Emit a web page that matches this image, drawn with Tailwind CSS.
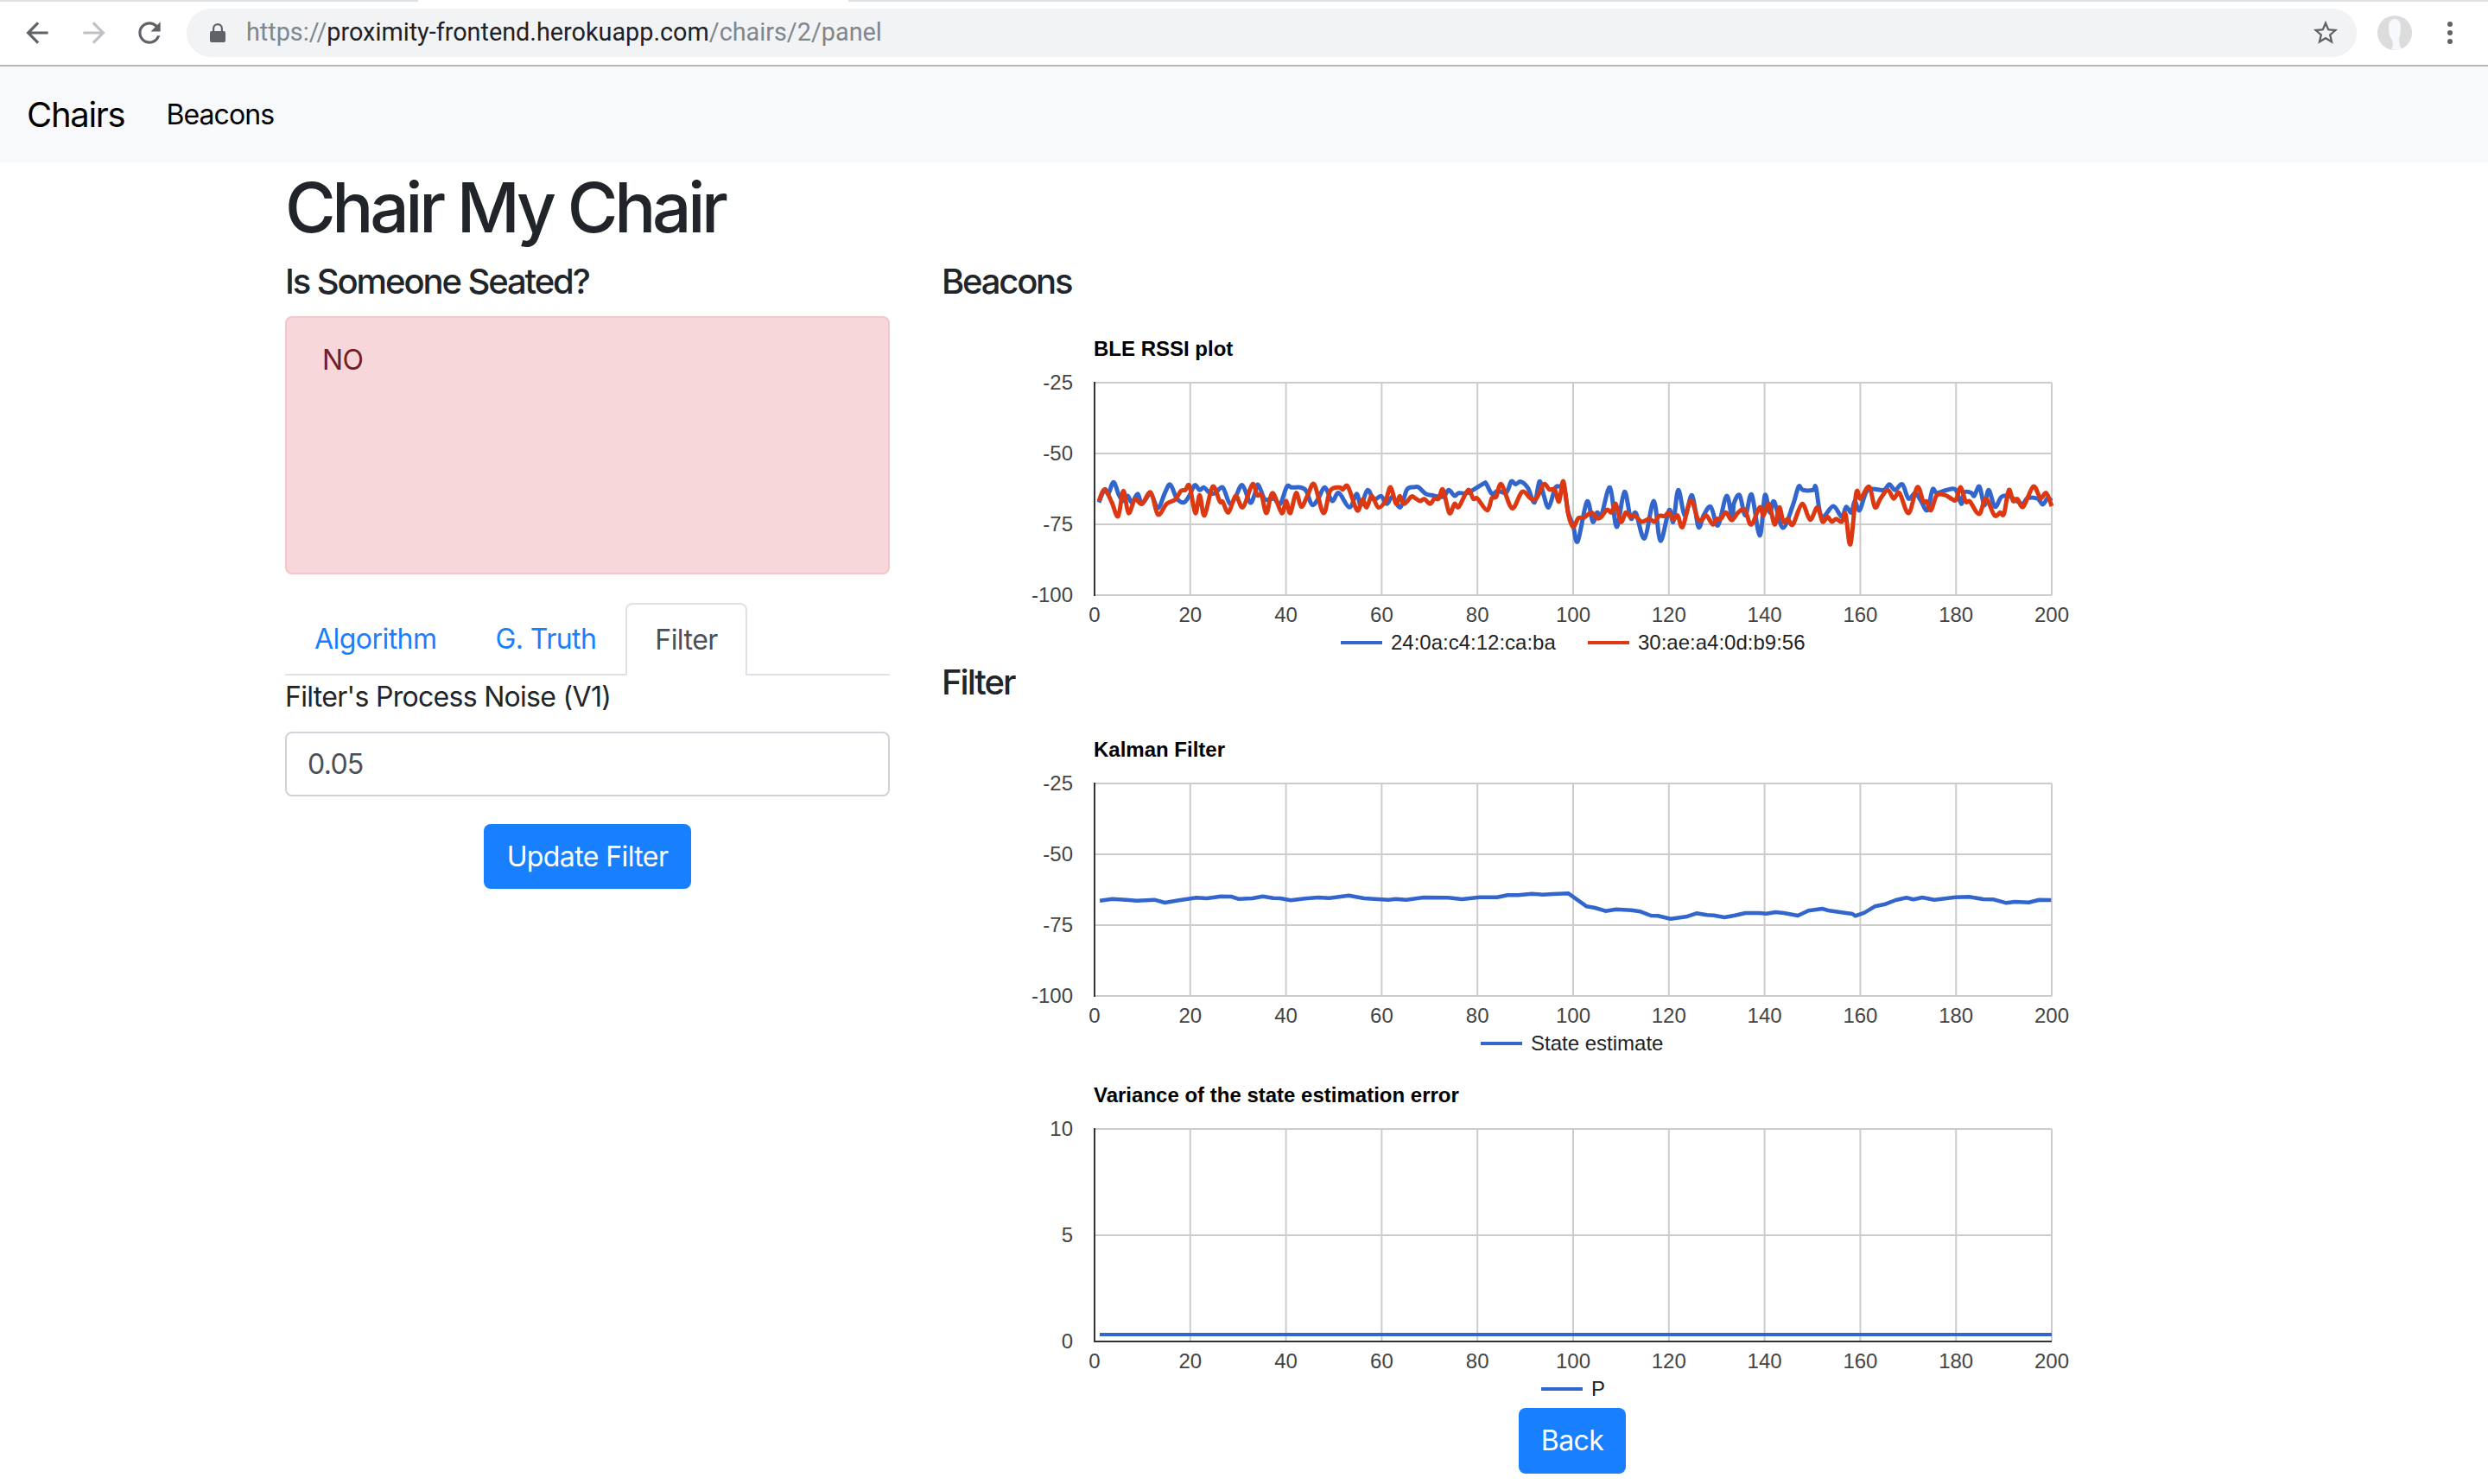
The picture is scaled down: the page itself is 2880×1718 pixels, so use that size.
<!DOCTYPE html>
<html lang="en">
<head>
    <meta charset="UTF-8">
    <meta name="viewport" content="width=device-width, initial-scale=1.0">
    <script src="https://cdn.jsdelivr.net/npm/@tailwindcss/browser@4"></script>
    <title>Chair My Chair</title>
</head>
<body class="bg-white font-['Inter','Liberation_Sans',sans-serif] text-[#212529]">
    <!-- browser chrome -->
    <div class="flex h-[2px]">
        <div class="w-[484px] bg-[#dee1e6]"></div>
        <div class="w-[498px] bg-white"></div>
        <div class="flex-1 bg-[#dee1e6]"></div>
    </div>
    <div class="flex items-center h-[75px] pb-[1px] border-b-2 border-[#b5b6b9] bg-white">
        <div class="flex items-center w-[216px] pl-[24px] gap-[28px]">
            <svg class="w-[38px] h-[38px] text-[#5f6368]" viewBox="0 0 24 24" fill="currentColor"><path d="M20 11H7.83l5.59-5.59L12 4l-8 8 8 8 1.41-1.41L7.83 13H20v-2z"/></svg>
            <svg class="w-[38px] h-[38px] text-[#bfc1c4]" viewBox="0 0 24 24" fill="currentColor"><path d="M4 11h12.17l-5.59-5.59L12 4l8 8-8 8-1.41-1.41L16.17 13H4v-2z"/></svg>
            <svg class="w-[38px] h-[38px] -ml-[2px] text-[#5f6368] shrink-0" viewBox="0 0 24 24" fill="currentColor"><path d="M17.65 6.35C16.2 4.9 14.21 4 12 4c-4.42 0-7.99 3.58-7.99 8s3.57 8 7.99 8c3.73 0 6.84-2.55 7.73-6h-2.08c-.82 2.33-3.04 4-5.65 4-3.31 0-6-2.69-6-6s2.69-6 6-6c1.66 0 3.14.69 4.22 1.78L13 11h7V4l-2.35 2.35z"/></svg>
        </div>
        <div class="flex items-center w-[2512px] h-[56px] rounded-full bg-[#f1f3f4] pl-[27px] pr-[19px]">
            <svg class="w-[18px] h-[22px] text-[#5f6368]" viewBox="0 0 18 22" fill="currentColor"><path d="M3 9V6a6 6 0 0 1 12 0v3h1a2 2 0 0 1 2 2v9a2 2 0 0 1-2 2H2a2 2 0 0 1-2-2v-9a2 2 0 0 1 2-2h1zm2.200 0h7.600V6a3.800 3.800 0 0 0-7.600 0v3z"/></svg>
            <div class="ml-[24px] text-[28.8px] font-['Roboto',sans-serif] text-[#80868b] whitespace-nowrap">https://<span class="text-[#202124]">proximity-frontend.herokuapp.com</span>/chairs/2/panel</div>
            <svg class="ml-auto w-[34px] h-[34px] text-[#5f6368]" viewBox="0 0 24 24" fill="currentColor"><path d="M22 9.24l-7.19-.62L12 2 9.19 8.63 2 9.24l5.46 4.73L5.82 21 12 17.27 18.18 21l-1.63-7.03L22 9.24zM12 15.4l-3.76 2.27 1-4.28-3.32-2.88 4.38-.38L12 6.1l1.71 4.04 4.38.38-3.32 2.88 1 4.28L12 15.4z"/></svg>
        </div>
        <svg class="ml-[24px] w-[40px] h-[40px]" viewBox="0 0 40 40"><circle cx="20" cy="20" r="20" fill="#dcdcdc"/><path d="M13 13c0-6 3-9 7-9s7 3 7 9c0 7-1 11-2 14 0 5 1 9 3 12-5 1.500-10 1-12 0 2-3 2-7 1-11-3-3-4-8-4-15z" fill="#f6f8fb"/></svg>
        <div class="ml-[41px] flex flex-col gap-[4px]">
            <div class="w-[6px] h-[6px] rounded-full bg-[#5f6368]"></div>
            <div class="w-[6px] h-[6px] rounded-full bg-[#5f6368]"></div>
            <div class="w-[6px] h-[6px] rounded-full bg-[#5f6368]"></div>
        </div>
    </div>

    <!-- navbar -->
    <nav class="flex items-center h-[111px] bg-[#f8f9fa] pl-[31px] text-black">
        <a class="text-[40px] tracking-[-1.3px]">Chairs</a>
        <a class="ml-[48px] text-[32px] tracking-[-0.9px]">Beacons</a>
    </nav>

    <!-- page -->
    <div class="pl-[330px]">
        <h1 class="text-[80px] leading-[96px] mt-[4px] font-medium tracking-[-4.3px]">Chair My Chair</h1>
        <div class="flex gap-[60px] mt-[14px]">
            <div class="w-[700px]">
                <h4 class="text-[40px] leading-[48px] font-medium tracking-[-2.1px]">Is Someone Seated?</h4>
                <div class="mt-[16px] h-[299px] rounded-lg border-2 border-[#f5c6cb] bg-[#f8d7da] px-[41px] py-[25px] text-[32px] leading-[48px] text-[#721c24] tracking-[-0.7px]">NO</div>
                <div class="flex mt-[33px] h-[84px] border-b-2 border-[#dee2e6] text-[32px] tracking-[-0.55px]">
                    <a class="flex items-center px-[34px] pt-[2px] text-[#187fff]">Algorithm</a>
                    <a class="flex items-center px-[34px] pt-[2px] text-[#187fff]">G. Truth</a>
                    <a class="flex items-center px-[32px] -mb-[2px] h-[84px] rounded-t-lg border-2 border-b-0 border-[#dee2e6] bg-white text-[#495057]">Filter</a>
                </div>
                <label class="block text-[32px] leading-[48px] mt-[1px] tracking-[-0.7px]">Filter's Process Noise (V1)</label>
                <input class="block w-full h-[75px] mt-[16px] rounded-lg border-2 border-[#ced4da] px-[24px] text-[32px] text-[#495057] tracking-[-0.7px]" type="text" value="0.05">
                <div class="flex justify-center mt-[32px]">
                    <button class="w-[240px] h-[75px] rounded-lg bg-[#187fff] text-white text-[32px] tracking-[-0.6px]" type="button">Update Filter</button>
                </div>
            </div>
            <div class="w-[1460px]">
                <h5 class="text-[40px] leading-[48px] font-medium mb-[8px] tracking-[-2.2px]">Beacons</h5>
                <div id="chart-rssi" class="h-[400px] mb-[8px] font-['Liberation_Sans',sans-serif]"></div>
                <h5 class="text-[40px] leading-[48px] font-medium mb-[8px] tracking-[-2px]">Filter</h5>
                <div id="chart-kalman" class="h-[400px] font-['Liberation_Sans',sans-serif]"></div>
                <div id="chart-variance" class="h-[400px] font-['Liberation_Sans',sans-serif]"></div>
                <div class="flex justify-center mt-[8px]">
                    <button class="w-[124px] h-[76px] rounded-lg bg-[#187fff] text-white text-[32px] tracking-[-0.6px]" type="button">Back</button>
                </div>
            </div>
        </div>
    </div>

    <script>
        // plot area inside each 1460x400 chart
        const LEFT = 177, RIGHT = 1285, TOP = 85, BOTTOM = 331;
        const BLUE = '#3366cc', RED = '#dc3912';

        // traced curves, three 370px wide pieces each
        const blue = [
            [15,155,35,110,48,125,66,85,85,130,100,150,115,132,130,155,150,125,165,160,195,125,220,175,245,120,263,93,285,140,310,155,330,130,348,95,365,112,380,103,400,122,420,122,445,103,470,160,490,135,513,95,540,155,555,130,568,93,590,143,610,143,625,143,645,160,668,100,685,103,715,103,735,115,755,163,775,145,800,103,825,150,848,122,885,172,910,125,925,165,948,112,970,145,995,133,1015,160,1035,135,1062,172,1085,110],
            [0,102,15,102,40,125,60,130,100,135,120,112,140,132,155,122,185,122,240,90,250,90,270,125,290,115,320,120,337,82,352,92,370,83,395,105,418,155,435,82,450,130,467,172,490,105,505,100,520,100,535,190,552,235,568,290,600,152,620,222,635,190,650,200,680,103,703,240,730,118,752,210,770,192,800,280,832,150,855,288,885,182,900,222,917,112,940,200,965,130,987,240,1005,200,1030,170,1055,235,1085,132,1105,215],
            [0,160,20,130,40,200,62,128,90,270,108,130,125,190,140,152,170,243,205,165,225,100,240,112,275,112,285,103,305,205,345,168,375,205,390,170,408,190,420,150,437,182,465,112,520,112,540,92,560,112,585,92,607,142,630,122,650,150,672,182,690,110,705,122,740,112,770,110,790,160,800,120,825,122,835,132,853,100,870,165,885,112,907,170,930,135,960,135,1000,160,1020,140,1055,142,1073,162,1090,140,1104,150]
        ];
        const red = [
            [15,150,35,110,60,155,82,203,100,115,118,192,140,145,165,160,195,120,220,197,250,160,280,145,300,115,315,112,330,98,350,192,365,130,382,200,410,100,435,152,445,152,465,190,490,132,515,172,548,92,565,130,580,130,597,192,618,122,650,192,665,150,680,192,700,122,718,170,740,130,763,92,795,192,818,115,850,103,862,110,880,100,912,183,930,145,945,172,963,133,985,172,1010,150,1028,102,1047,160,1060,133,1075,160,1100,135],
            [0,138,20,150,35,143,55,160,70,142,85,142,100,110,122,192,140,160,155,170,187,112,205,142,220,142,253,182,270,140,285,135,303,92,340,175,375,118,405,142,425,140,450,92,470,110,488,110,503,152,518,82,535,195,552,240,570,210,590,208,615,190,635,210,650,205,670,180,685,190,700,160,718,222,735,190,750,205,765,200,790,222,815,212,835,222,850,202,870,202,885,190,900,215,915,200,932,240,960,148,985,212,1000,215,1015,200,1037,232,1050,212,1065,212,1082,190,1100,215],
            [0,210,15,190,38,180,60,232,90,172,103,200,122,160,142,232,158,172,172,222,188,212,205,232,237,160,265,215,290,172,308,222,325,205,340,222,355,212,375,222,388,195,405,300,425,122,440,142,470,100,490,172,510,140,535,112,555,142,575,122,607,192,637,102,658,152,670,152,685,182,705,130,735,130,760,145,772,145,788,102,805,152,820,152,852,195,875,142,905,200,925,190,938,195,955,112,970,150,985,143,1005,170,1040,100,1065,140,1085,122,1104,168]
        ];
        const kalman = [152,428,170,422,190,425,205,428,230,425,245,435,265,427,290,418,305,420,325,413,340,414,350,422,370,420,385,413,400,419,410,420,425,427,445,421,465,417,480,419,508,410,530,420,565,425,575,422,590,425,615,417,650,418,670,423,695,416,720,416,735,409,750,409,770,404,785,407,800,405,822,403,848,448,860,453,875,464,890,458,912,461,925,466,940,480,950,481,968,491,990,484,1005,472,1020,478,1030,479,1045,486,1060,479,1075,471,1095,471,1105,473,1118,468,1130,471,1150,480,1165,463,1185,456,1195,463,1228,474,1232,481,1245,470,1260,448,1275,440,1290,426,1305,418,1315,424,1328,417,1345,425,1375,416,1395,415,1415,423,1430,424,1448,436,1460,432,1480,434,1495,425,1512,426];

        // crop coordinates to chart coordinates
        function tracePoints(pieces) {
            const pts = [];
            const offsets = [177, 547, 917];
            pieces.forEach((piece, p) => {
                for (let i = 0; i < piece.length; i += 2) {
                    pts.push([offsets[p] + piece[i] / 3, 172 + piece[i + 1] / 3]);
                }
            });
            return pts;
        }

        function kalmanPoints() {
            const pts = [];
            for (let i = 0; i < kalman.length; i += 2) {
                pts.push([60 + kalman[i] / 1.235, 78 + kalman[i + 1] / 3]);
            }
            return pts;
        }

        // catmull-rom through the points, like curveType: function
        function smoothPath(pts) {
            let d = `M${pts[0][0]} ${pts[0][1]}`;
            for (let i = 0; i < pts.length - 1; i++) {
                const p0 = pts[Math.max(i - 1, 0)], p1 = pts[i], p2 = pts[i + 1], p3 = pts[Math.min(i + 2, pts.length - 1)];
                const c1x = p1[0] + (p2[0] - p0[0]) / 6, c1y = p1[1] + (p2[1] - p0[1]) / 6;
                const c2x = p2[0] - (p3[0] - p1[0]) / 6, c2y = p2[1] - (p3[1] - p1[1]) / 6;
                d += `C${c1x.toFixed(1)} ${c1y.toFixed(1)} ${c2x.toFixed(1)} ${c2y.toFixed(1)} ${p2[0].toFixed(1)} ${p2[1].toFixed(1)}`;
            }
            return d;
        }

        function linePath(pts) {
            return 'M' + pts.map(p => p[0].toFixed(1) + ' ' + p[1].toFixed(1)).join('L');
        }

        function drawChart(id, opts) {
            const w = RIGHT - LEFT, h = BOTTOM - TOP;
            let s = `<svg width="1460" height="400" viewBox="0 0 1460 400" font-size="24" class="block">`;
            s += `<text x="176" y="54" font-weight="bold" fill="#000">${opts.title}</text>`;
            for (let i = 0; i <= 10; i++) {
                const x = LEFT + w * i / 10;
                if (i > 0) s += `<line x1="${x}" x2="${x}" y1="${TOP}" y2="${BOTTOM}" stroke="#ccc" stroke-width="2"/>`;
                s += `<text x="${x}" y="362" text-anchor="middle" fill="#444">${i * 20}</text>`;
            }
            opts.yLabels.forEach((label, i) => {
                const y = TOP + h * i / (opts.yLabels.length - 1);
                s += `<line x1="${LEFT}" x2="${RIGHT}" y1="${y}" y2="${y}" stroke="#ccc" stroke-width="2"/>`;
                s += `<text x="152" y="${y + 8}" text-anchor="end" fill="#444">${label}</text>`;
            });
            s += `<line x1="${LEFT}" x2="${LEFT}" y1="${TOP - 1}" y2="${BOTTOM + 1}" stroke="#333" stroke-width="2"/>`;
            if (opts.baseline) s += `<line x1="${LEFT}" x2="${RIGHT}" y1="${BOTTOM}" y2="${BOTTOM}" stroke="#333" stroke-width="2"/>`;
            opts.paths.forEach(p => {
                s += `<path d="${p.d}" fill="none" stroke="${p.color}" stroke-width="${p.width}" stroke-linejoin="round"/>`;
            });
            opts.legend.forEach(l => {
                s += `<line x1="${l.x}" x2="${l.x + 48}" y1="386" y2="386" stroke="${l.color}" stroke-width="4"/>`;
                s += `<text x="${l.x + 58}" y="394" fill="#222">${l.label}</text>`;
            });
            document.getElementById(id).innerHTML = s + '</svg>';
        }

        drawChart('chart-rssi', {
            title: 'BLE RSSI plot',
            yLabels: ['-25', '-50', '-75', '-100'],
            paths: [
                { d: smoothPath(tracePoints(blue)), color: BLUE, width: 5 },
                { d: smoothPath(tracePoints(red)), color: RED, width: 5 }
            ],
            legend: [
                { x: 462, color: BLUE, label: '24:0a:c4:12:ca:ba' },
                { x: 748, color: RED, label: '30:ae:a4:0d:b9:56' }
            ]
        });
        drawChart('chart-kalman', {
            title: 'Kalman Filter',
            yLabels: ['-25', '-50', '-75', '-100'],
            paths: [{ d: linePath(kalmanPoints()), color: BLUE, width: 4.5 }],
            legend: [{ x: 624, color: BLUE, label: 'State estimate' }]
        });
        drawChart('chart-variance', {
            title: 'Variance of the state estimation error',
            yLabels: ['10', '5', '0'],
            baseline: true,
            paths: [{ d: 'M183 323H1285', color: BLUE, width: 4 }],
            legend: [{ x: 694, color: BLUE, label: 'P' }]
        });
    </script>
</body>
</html>
